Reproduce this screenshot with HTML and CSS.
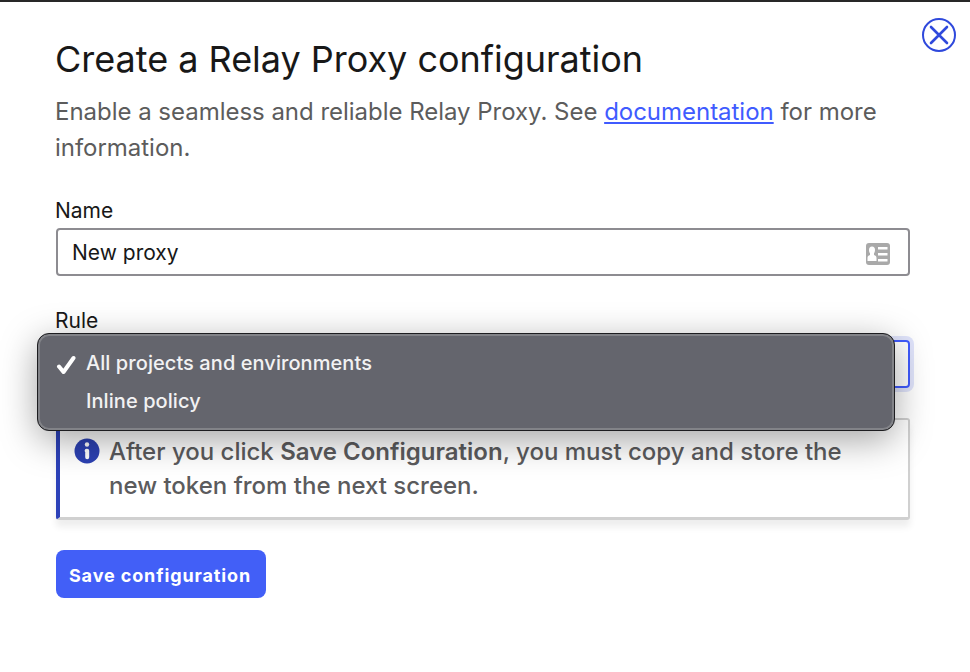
FILE: index.html
```
<!DOCTYPE html>
<html lang="en">
<head>
<meta charset="utf-8">
<title>Create a Relay Proxy configuration</title>
<link rel="stylesheet" href="styles.css">
</head>
<body>
<main class="dialog">
  <button class="close" aria-label="Close"><svg viewBox="0 0 36 36" fill="none" stroke="#2f49dc"><circle cx="18" cy="18" r="16" stroke-width="2"/><path d="M10 10l16 16M26 10l-16 16" stroke-width="2.6" stroke-linecap="round"/></svg></button>
  <h1>Create a Relay Proxy configuration</h1>
  <p class="intro">Enable a seamless and reliable Relay Proxy. See <a href="#">documentation</a> for more<br>information.</p>
  <label class="name-label">Name</label>
  <div class="field"><span>New proxy</span>
    <svg class="card" viewBox="0 0 24 22"><rect width="24" height="22" rx="3" fill="#a9a9a9"/><path d="M6 3.5c2 0 3 1.3 3 3.5 0 1.6-.5 2.6-1 3.2v1.8c1.500.5 2.500 1.200 2.500 3V18h-9v-3c0-1.800 1-2.500 2.500-3v-1.800C3.500 9.600 3 8.600 3 7c0-2.200 1-3.500 3-3.500zM12 4h9.500v2.500H12zM12 10h9.500v2.500H12zM12 16h9.500v2.500H12z" fill="#fff"/></svg>
  </div>
  <label class="rule-label">Rule</label>
  <div class="select">
    <div class="menu">
      <div class="option"><svg class="check" viewBox="0 0 20 20" fill="none" stroke="#fff" stroke-width="4" stroke-linecap="round" stroke-linejoin="round"><path d="M3 11.500l4.500 5.500L17.500 3"/></svg>All projects and environments</div>
      <div class="option">Inline policy</div>
    </div>
  </div>
  <div class="notice">
    <svg class="info" viewBox="0 0 26 26"><circle cx="13" cy="13" r="12.5" fill="#2c41b3"/><circle cx="13" cy="6.500" r="2.200" fill="#fff"/><path d="M12.600 12.700h.6v6.600" fill="none" stroke="#fff" stroke-width="4" stroke-linecap="round" stroke-linejoin="round"/></svg>
    <p>After you click <b>Save Configuration</b>, you must copy and store the<br>new token from the next screen.</p>
  </div>
  <button class="save">Save configuration</button>
</main>
</body>
</html>
```
FILE: styles.css
```
* { box-sizing: border-box; }
body { margin: 0; background: #fff; font-family: Inter, sans-serif; color: #181818; }
.dialog { position: relative; height: 672px; border-top: 2px solid #282828; padding: 33px 60px 0 56px; display: flex; flex-direction: column; overflow: hidden; }
.close { position: absolute; top: 15px; right: 13px; width: 36px; height: 36px; padding: 0; border: 0; background: none; }
.close svg { display: block; }
h1 { margin: 0 0 0 -1px; font-size: 36px; font-weight: 400; line-height: 48px; letter-spacing: -.02px; white-space: nowrap; }
.intro { margin: 11px 0 0 -1px; font-size: 24px; line-height: 36px; letter-spacing: -.025px; color: #5c5c5c; white-space: nowrap; }
a { color: #405bff; text-decoration-thickness: 2px; text-underline-offset: 2px; }
label { margin-left: -1px; font-size: 21px; line-height: 28px; }
.name-label { margin-top: 31px; }
.field { margin-top: 3px; height: 48px; border: 2px solid #8d8c91; border-radius: 4px; padding: 0 18px 0 14px; display: flex; align-items: center; justify-content: space-between; font-size: 21px; }
.card { width: 24px; height: 22px; margin-top: 3px; }
.rule-label { margin-top: 31px; }
.select { position: relative; flex: none; margin-top: 5px; height: 48px; border: 2px solid #405bff; border-radius: 4px; box-shadow: 0 0 0 4px #e0e4fb; }
.menu { position: absolute; z-index: 2; left: -21px; top: -9px; width: 858px; height: 98px; padding: 10px 8px; border: 1px solid #1d1d20; border-radius: 12px; background: #64656d; box-shadow: inset 0 0 0 2px #828388, 0 9px 36px rgba(0, 0, 0, .36); color: #f2f2f3; font-size: 20px; font-weight: 500; letter-spacing: .07px; }
.option { position: relative; height: 38px; line-height: 38px; padding-left: 40px; }
.check { position: absolute; left: 10px; top: 11px; width: 20px; height: 20px; }
.notice { margin-top: 30px; height: 102px; border: 2px solid #d0d0d0; border-left: 4px solid #2c41b8; border-bottom-width: 3px; border-radius: 3px; box-shadow: 0 7px 7px rgba(0, 0, 0, .07); padding: 15px 15px 14px 14px; display: flex; gap: 9px; }
.info { width: 26px; height: 26px; margin-top: 3px; flex: none; }
.notice p { margin: 0; font-size: 24px; line-height: 34px; font-weight: 500; color: #5b5b5d; white-space: nowrap; }
.notice b { font-weight: 600; }
.save { margin-top: 30px; flex: none; width: 210px; height: 48px; padding: 3px 2px 0 0; border: 0; border-radius: 8px; background: #425ff7; color: #fff; font: 700 18px Inter, sans-serif; letter-spacing: .88px; }
```
